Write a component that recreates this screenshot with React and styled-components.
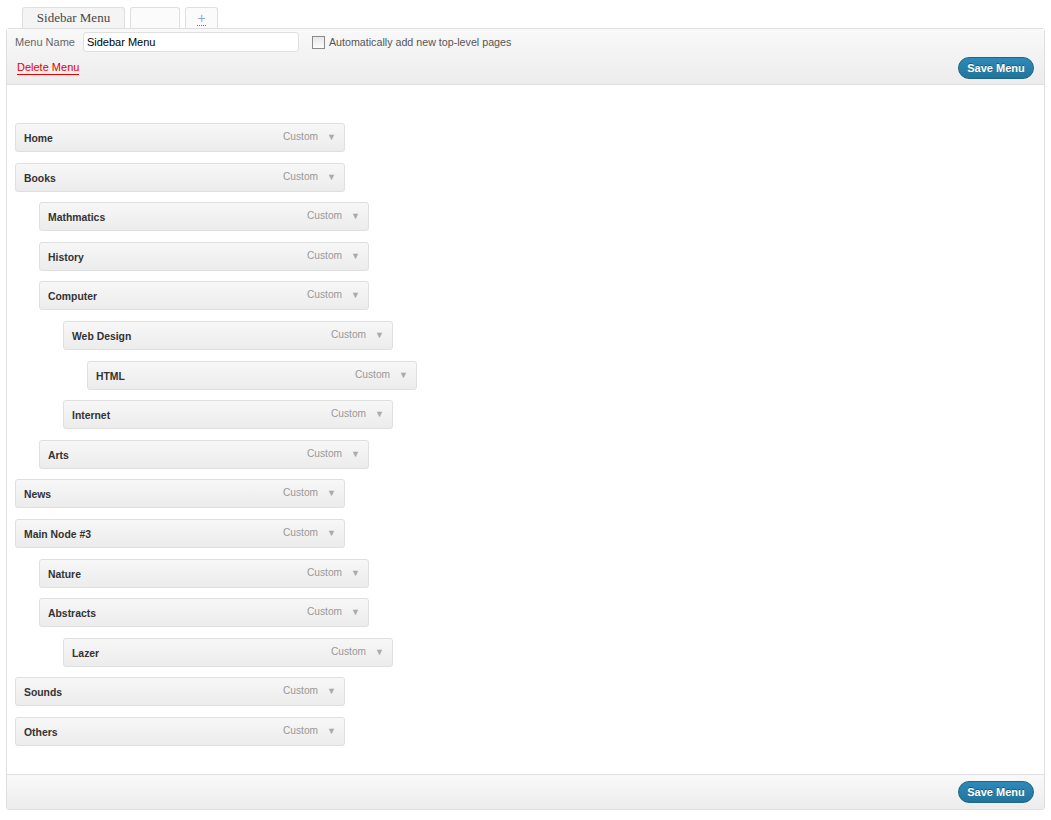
import React from 'react';
import styled, { createGlobalStyle } from 'styled-components';

const GlobalStyle = createGlobalStyle`
body {
  margin: 0;
  background: #ffffff;
  font-family: "Liberation Sans", Arial, sans-serif;
}
`

const Page = styled.div`
padding: 6px 6px 10px 6px;
`
const Tabs = styled.div`
display: flex;
align-items: flex-end;
gap: 5px;
padding-left: 16px;
height: 22px;
`
const Tab = styled.div`
width: ${p => p.w}px;
height: 21px;
box-sizing: border-box;
border: 1px solid #dfdfdf;
border-bottom: none;
border-radius: 3px 3px 0 0;
background: ${p => p.active ? '#f4f4f4' : '#fbfbfb'};
display: flex;
align-items: center;
justify-content: center;
font-family: "Liberation Serif", "DejaVu Serif", serif;
font-size: 13px;
color: #464646;
`
const Plus = styled.span`
font-family: "Liberation Sans", Arial, sans-serif;
font-size: 14px;
color: #8fa9c9;
border-bottom: 1px dotted #777;
line-height: 13px;
margin-top: 2px;
`
const Panel = styled.div`
border: 1px solid #dfdfdf;
border-radius: 3px;
background: #ffffff;
`
const Header = styled.div`
height: 56px;
border-bottom: 1px solid #dfdfdf;
background: linear-gradient(to bottom, #f9f9f9, #ececec);
padding: 3px 10px 0 8px;
box-sizing: border-box;
`
const NameRow = styled.div`
display: flex;
align-items: center;
height: 20px;
`
const Label = styled.span`
font-size: 11px;
color: #666;
margin-right: 8px;
`
const NameInput = styled.input`
width: 216px;
height: 20px;
box-sizing: border-box;
border: 1px solid #dfdfdf;
border-radius: 3px;
padding: 0 3px;
font-family: "Liberation Sans", Arial, sans-serif;
font-size: 11px;
color: #000;
background: #fff;
outline: none;
`
const CheckLabel = styled.label`
display: flex;
align-items: center;
margin-left: 13px;
font-size: 10.7px;
color: #555;
`
const Box = styled.span`
width: 11px;
height: 11px;
border: 1px solid #8a8a8a;
background: linear-gradient(to bottom, #e8e8e8, #fbfbfb);
margin-right: 4px;
`
const ActionRow = styled.div`
display: flex;
justify-content: space-between;
align-items: center;
margin-top: 5px;
`
const DeleteLink = styled.a`
font-size: 11px;
color: #e60000;
border-bottom: 1px solid #e60000;
margin-left: 2px;
margin-top: -1px;
line-height: 13px;
cursor: pointer;
`
const SaveButton = styled.button`
width: 76px;
height: 22px;
border: 1px solid #1f6585;
border-radius: 11px;
background: linear-gradient(to bottom, #2e8ab9, #21759b);
color: #ffffff;
font-family: "Liberation Sans", Arial, sans-serif;
font-weight: bold;
font-size: 11px;
text-shadow: 0 -1px 0 rgba(0,0,0,0.35);
padding: 0;
cursor: pointer;
`
const Body = styled.div`
padding: 38px 8px 28px 8px;
`
const Item = styled.div`
width: 330px;
height: 29px;
box-sizing: border-box;
margin-left: ${p => p.depth * 24}px;
margin-bottom: 10.6px;
border: 1px solid #dfdfdf;
border-radius: 3px;
background: linear-gradient(to bottom, #f7f7f7, #ececec);
display: flex;
align-items: center;
padding: 0 8px 0 8px;
&:last-child { margin-bottom: 0; }
`
const Title = styled.span`
flex: 1;
font-size: 10.4px;
font-weight: bold;
color: #333;
margin-top: 2px;
`
const Type = styled.span`
font-size: 10.2px;
color: #999;
margin-top: -2px;
`
const Arrow = styled.span`
color: #aaa;
font-size: 9px;
margin-left: 9px;
margin-top: -1px;
`
const Footer = styled.div`
height: 34px;
border-top: 1px solid #dfdfdf;
background: linear-gradient(to bottom, #f9f9f9, #ececec);
display: flex;
justify-content: flex-end;
align-items: center;
padding-right: 10px;
`

const items = [
  ['Home', 0], ['Books', 0], ['Mathmatics', 1], ['History', 1], ['Computer', 1],
  ['Web Design', 2], ['HTML', 3], ['Internet', 2], ['Arts', 1], ['News', 0],
  ['Main Node #3', 0], ['Nature', 1], ['Abstracts', 1], ['Lazer', 2],
  ['Sounds', 0], ['Others', 0],
];

function App() {
  return (
    <Page>
      <GlobalStyle />
      <Tabs>
        <Tab w={103} active>Sidebar Menu</Tab>
        <Tab w={50}></Tab>
        <Tab w={33}><Plus>+</Plus></Tab>
      </Tabs>
      <Panel>
        <Header>
          <NameRow>
            <Label>Menu Name</Label>
            <NameInput defaultValue="Sidebar Menu" />
            <CheckLabel><Box />Automatically add new top-level pages</CheckLabel>
          </NameRow>
          <ActionRow>
            <DeleteLink>Delete Menu</DeleteLink>
            <SaveButton>Save Menu</SaveButton>
          </ActionRow>
        </Header>
        <Body>
          {items.map(([name, depth]) => (
            <Item key={name} depth={depth}>
              <Title>{name}</Title>
              <Type>Custom</Type>
              <Arrow>▼</Arrow>
            </Item>
          ))}
        </Body>
        <Footer>
          <SaveButton>Save Menu</SaveButton>
        </Footer>
      </Panel>
    </Page>
  )
}

export default App
